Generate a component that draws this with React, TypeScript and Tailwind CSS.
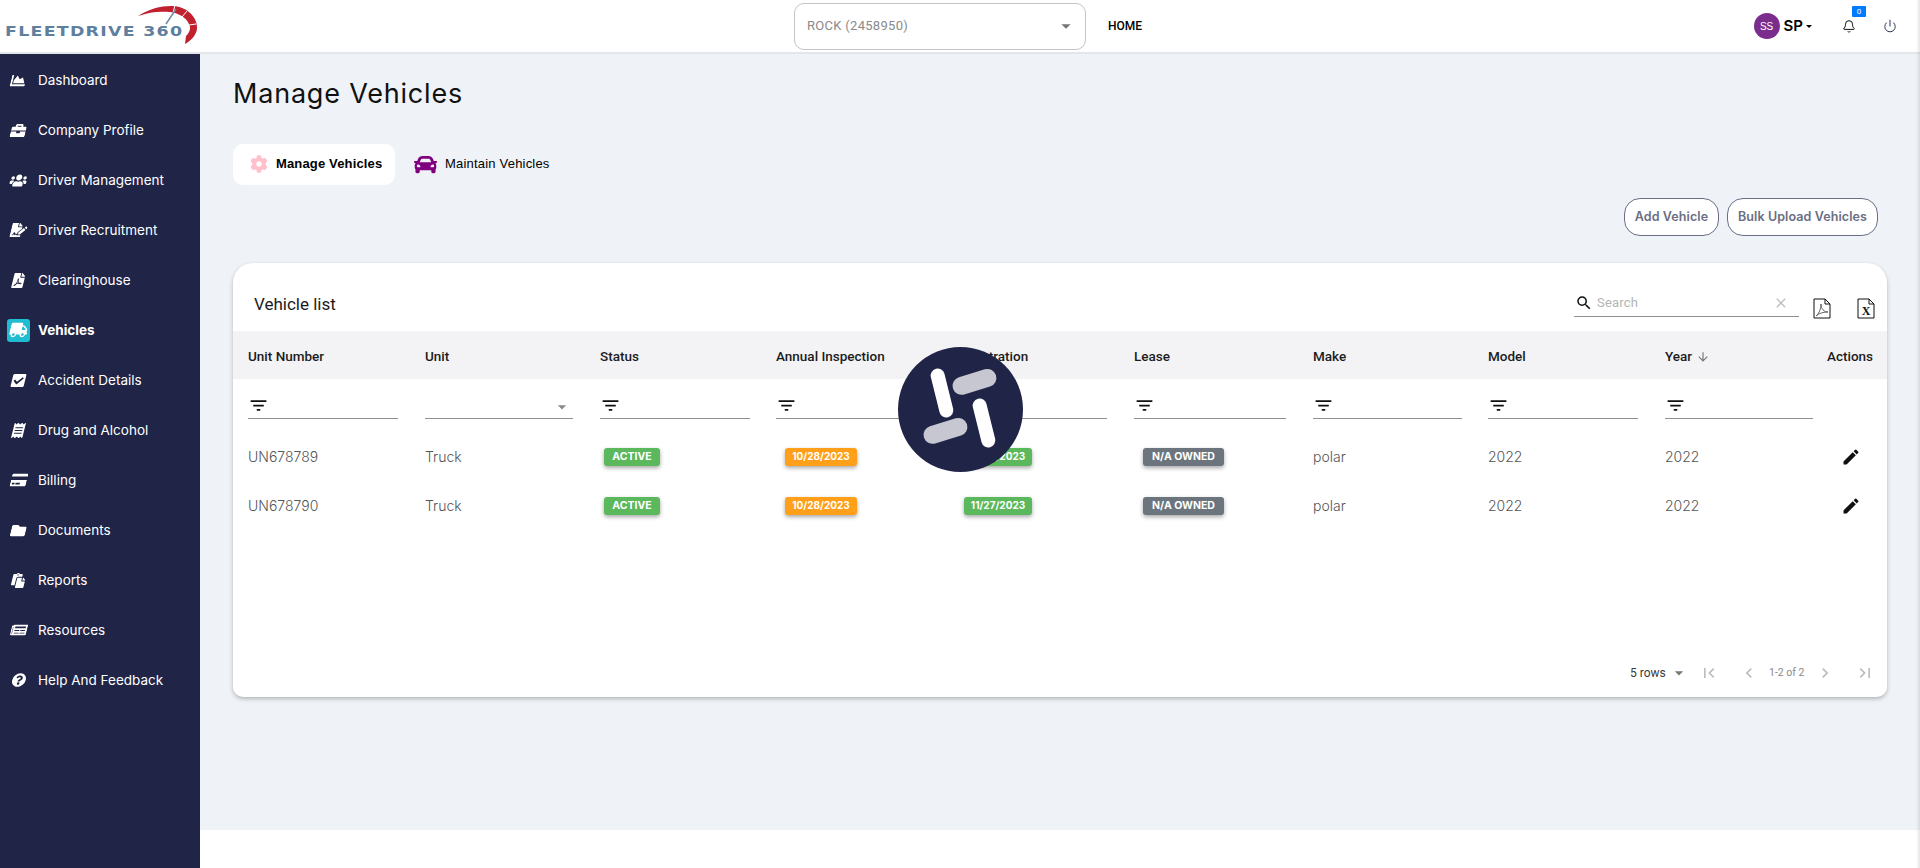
import {
  FaBriefcase,
  FaCar,
  FaChartArea,
  FaCheckSquare,
  FaCog,
  FaCreditCard,
  FaFilePdf,
  FaFileSignature,
  FaFolder,
  FaNewspaper,
  FaPaste,
  FaQuestionCircle,
  FaReceipt,
  FaTruck,
  FaUsers,
} from "react-icons/fa";
import {
  MdArrowDownward,
  MdArrowDropDown,
  MdChevronLeft,
  MdChevronRight,
  MdClear,
  MdEdit,
  MdFilterList,
  MdFirstPage,
  MdLastPage,
  MdSearch,
} from "react-icons/md";
import { Bell, Power } from "lucide-react";

const navItems = [
  { label: "Dashboard", icon: FaChartArea, size: 15 },
  { label: "Company Profile", icon: FaBriefcase, size: 15 },
  { label: "Driver Management", icon: FaUsers, size: 17 },
  { label: "Driver Recruitment", icon: FaFileSignature, size: 16 },
  { label: "Clearinghouse", icon: FaFilePdf, size: 15 },
  { label: "Vehicles", icon: FaTruck, size: 18, active: true },
  { label: "Accident Details", icon: FaCheckSquare, size: 15 },
  { label: "Drug and Alcohol", icon: FaReceipt, size: 15 },
  { label: "Billing", icon: FaCreditCard, size: 16 },
  { label: "Documents", icon: FaFolder, size: 15 },
  { label: "Reports", icon: FaPaste, size: 15 },
  { label: "Resources", icon: FaNewspaper, size: 16 },
  { label: "Help And Feedback", icon: FaQuestionCircle, size: 14 },
];

const columns = ["Unit Number", "Unit", "Status", "Annual Inspection", "Registration", "Lease", "Make", "Model"];

const rows = [
  { unit: "UN678789" },
  { unit: "UN678790" },
];

const gridCols = "grid grid-cols-[177px_175px_176px_179px_179px_179px_175px_177px_162px_1fr] pl-[15px]";

function Logo() {
  return (
    <div className="relative h-[52px] w-[200px] shrink-0">
      <span className="absolute left-[5px] top-[19px] origin-left scale-x-[1.2] font-['DejaVu_Sans'] text-[14.500px] font-bold leading-[24px] tracking-[1.05px] text-[#5f7f9f] whitespace-nowrap">
        FLEETDRIVE 360
      </span>
      <svg className="absolute left-0 top-0" width="200" height="52" viewBox="0 0 200 52">
        <path
          d="M138 16C150 8 163 5.500 173 6C188 7 198 18 197 29C196 35 192 40 185 44L186 36C190 32 191 28 189 24C186 17 178 13 170 12C159 11 149 12 138 16Z"
          fill="#c1202f"
        />
        <path d="M175 5L173 13M187 11L182 17M196 24L189 25" stroke="#fff" strokeWidth="1" />
        <path d="M166 24L176 9" stroke="#6d8aa6" strokeWidth="1.500" />
      </svg>
    </div>
  );
}

function Header() {
  return (
    <header className="flex h-[54px] shrink-0 items-center border-b-2 border-[#e2e6ea] bg-white">
      <Logo />
      <div className="ml-[594px] flex h-[47px] w-[292px] items-center justify-between rounded-[10px] border border-[#c4c4c4] pl-[12px] pr-[8px] font-['Roboto'] text-[13px] tracking-[0.3px] text-[#8a8a8a]">
        <span>ROCK (2458950)</span>
        <MdArrowDropDown size={22} className="text-[#757575]" />
      </div>
      <span className="ml-[22px] font-['Roboto'] text-[12px] font-medium text-black">HOME</span>
      <div className="ml-auto flex items-center pr-[23px]">
        <div className="flex h-[26px] w-[26px] items-center justify-center rounded-full bg-[#7b2d8e] font-['Liberation_Sans'] text-[10px] text-white">
          SS
        </div>
        <span className="ml-[4px] font-['Inter'] text-[15px] font-semibold text-black">SP</span>
        <span className="ml-[3px] h-0 w-0 border-x-[3px] border-t-[3px] border-x-transparent border-t-black" />
        <div className="relative ml-[30px] flex h-[26px] w-[14px] items-center justify-center pt-[1px]">
          <Bell size={15} strokeWidth={1.600} className="text-black" />
          <span className="absolute left-[10px] top-[-7px] flex h-[11px] w-[14px] items-center justify-center rounded-[1px] bg-[#007bff] font-['Roboto'] text-[8px] text-white">
            0
          </span>
        </div>
        <Power size={14} strokeWidth={1.600} className="ml-[27px] text-[#1f2a4d]" />
      </div>
    </header>
  );
}

function Sidebar() {
  return (
    <aside className="w-[200px] shrink-0 bg-[#202447] pt-[1px]">
      {navItems.map((item) => {
        const Icon = item.icon;
        return (
          <div key={item.label} className="flex h-[50px] items-center text-white">
            <div
              className={`ml-[7px] flex h-[23px] w-[23px] items-center justify-center rounded-[3px] ${
                item.active ? "bg-[#1fbcd2]" : ""
              }`}
            >
              <Icon size={item.size} className="-skew-x-[14deg]" />
            </div>
            <span
              className={`ml-[8px] font-['Inter'] text-[13.500px] ${item.active ? "font-bold" : "font-normal"}`}
            >
              {item.label}
            </span>
          </div>
        );
      })}
    </aside>
  );
}

function FilterCell({ w = "w-[150px]" }: { w?: string }) {
  return (
    <div className={`flex h-[24px] items-center border-b border-[#8f8f8f] pb-[2px] ${w}`}>
      <MdFilterList size={21} className="text-[#111]" />
    </div>
  );
}

function DocIcon({ kind }: { kind: "pdf" | "xls" }) {
  return (
    <svg width="18" height="21" viewBox="0 0 18 21" fill="none">
      <path d="M1 1H12L17 6V20H1Z M12 1V6H17" stroke="#111" strokeWidth="1" fill="#fff" />
      {kind === "pdf" ? (
        <path d="M3 18C6 16 8 11 8 6C8 11 11 14 15 14C11 14 6 15 3 18Z" stroke="#555" strokeWidth="0.900" />
      ) : (
        <text x="9" y="17" textAnchor="middle" fontFamily="Liberation Serif" fontWeight="700" fontSize="12" fill="#111">
          X
        </text>
      )}
    </svg>
  );
}

function Badge({ text, color, className }: { text: string; color: string; className: string }) {
  return (
    <span
      className={`flex h-[18px] items-center justify-center rounded-[3px] font-['Inter'] font-bold text-white shadow-[0_2px_4px_rgba(0,0,0,0.35)] ${color} ${className}`}
    >
      {text}
    </span>
  );
}

function VehicleTable() {
  return (
    <div className="flex h-[434px] flex-col rounded-t-[20px] rounded-b-[10px] bg-white shadow-[0_2px_4px_rgba(0,0,0,0.25)]">
      <div className="flex h-[68px] shrink-0 items-end pb-[12px] pl-[21px] pr-[12px]">
        <span className="mb-[3px] font-['Roboto'] text-[17px] leading-[24px] text-[#1b1b1b]">Vehicle list</span>
        <div className="mb-[2px] ml-auto flex h-[30px] w-[225px] items-center border-b border-[#8f8f8f] pl-[1px] pr-[10px] pt-[3px]">
          <MdSearch size={18} className="text-[#111]" />
          <span className="ml-[4px] font-['Roboto'] text-[13px] tracking-[0.2px] text-[#b5b5b5]">Search</span>
          <MdClear size={16} className="ml-auto text-[#bdbdbd]" />
        </div>
        <div className="ml-[14px] flex">
          <DocIcon kind="pdf" />
        </div>
        <div className="ml-[26px] flex">
          <DocIcon kind="xls" />
        </div>
      </div>

      <div className={`${gridCols} h-[48px] shrink-0 items-center bg-[#f3f3f6] pt-[3px] font-['Roboto'] text-[13.500px] font-medium text-[#1c1c1c]`}>
        {columns.map((col) => (
          <span key={col}>{col}</span>
        ))}
        <span className="flex items-center">
          Year
          <MdArrowDownward size={14} className="ml-[4px] text-[#777]" />
        </span>
        <span>Actions</span>
      </div>

      <div className={`${gridCols} h-[53px] shrink-0 items-end pb-[13px]`}>
        <FilterCell />
        <div className="flex h-[24px] w-[148px] items-center justify-end border-b border-[#8f8f8f] pr-[1px]">
          <MdArrowDropDown size={20} className="text-[#8a8a8a]" />
        </div>
        <FilterCell />
        <FilterCell />
        <FilterCell w="w-[152px]" />
        <FilterCell w="w-[152px]" />
        <FilterCell w="w-[149px]" />
        <FilterCell />
        <FilterCell w="w-[148px]" />
      </div>

      {rows.map((row) => (
        <div
          key={row.unit}
          className={`${gridCols} h-[49px] shrink-0 items-center font-['Inter'] text-[14px] font-light text-[#555]`}
        >
          <span>{row.unit}</span>
          <span>Truck</span>
          <span>
            <Badge text="ACTIVE" color="bg-[#5cb85c]" className="ml-[4px] w-[56px] text-[10.500px]" />
          </span>
          <span>
            <Badge text="10/28/2023" color="bg-[#ff9f1a]" className="ml-[9px] w-[72px] text-[10px]" />
          </span>
          <span>
            <Badge text="11/27/2023" color="bg-[#5cb85c]" className="ml-[9px] w-[68px] text-[10px]" />
          </span>
          <span>
            <Badge text="N/A OWNED" color="bg-[#6c757d]" className="ml-[9px] w-[81px] text-[10.500px]" />
          </span>
          <span>polar</span>
          <span>2022</span>
          <span>2022</span>
          <span className="pl-[14px]">
            <MdEdit size={20} className="text-[#111]" />
          </span>
        </div>
      ))}

      <div className="mt-auto flex h-[48px] items-center pl-[1397px] font-['Roboto'] text-[#3a3a3a]">
        <span className="w-[35px] whitespace-nowrap text-[12px]">5 rows</span>
        <MdArrowDropDown size={20} className="ml-[4px] text-[#777]" />
        <MdFirstPage size={20} className="ml-[10px] text-[#bdbdbd]" />
        <MdChevronLeft size={20} className="ml-[20px] text-[#bdbdbd]" />
        <span className="ml-[10px] whitespace-nowrap text-[10.500px] text-[#8a8a8a]">1-2 of 2</span>
        <MdChevronRight size={20} className="ml-[11px] text-[#bdbdbd]" />
        <MdLastPage size={20} className="ml-[20px] text-[#bdbdbd]" />
      </div>
    </div>
  );
}

function Loader() {
  return (
    <svg className="absolute left-[898px] top-[347px]" width="125" height="125" viewBox="0 0 125 125">
      <circle cx="62.500" cy="62.500" r="62.500" fill="#202447" />
      <rect x="37" y="21" width="14" height="50" rx="7" fill="#fff" transform="rotate(-14 44 46)" />
      <rect x="54" y="26" width="45" height="18" rx="9" fill="#c6c7d0" transform="rotate(-17 76 35)" />
      <rect x="79" y="51" width="14" height="50" rx="7" fill="#fff" transform="rotate(-14 86 76)" />
      <rect x="25" y="75" width="45" height="18" rx="9" fill="#c6c7d0" transform="rotate(-17 47 84)" />
    </svg>
  );
}

export default function App() {
  return (
    <div className="relative flex h-[868px] w-full flex-col overflow-hidden bg-white">
      <Header />
      <div className="flex min-h-0 flex-1">
        <Sidebar />
        <div className="flex min-w-0 flex-1 flex-col">
          <main className="h-[776px] shrink-0 bg-[#eff3f7] px-[33px] pt-[24px]">
            <h1 className="font-['Inter'] text-[27px] font-normal leading-[32px] tracking-[0.8px] text-[#111]">Manage Vehicles</h1>
            <div className="mt-[34px] flex items-center">
              <div className="flex h-[41px] w-[162px] items-center rounded-[10px] bg-white pb-[1px] pl-[17px]">
                <FaCog size={18} className="text-[#ffc0cb]" />
                <span className="ml-[8px] font-['Liberation_Sans'] text-[13px] font-bold tracking-[0.15px] text-black">Manage Vehicles</span>
              </div>
              <div className="ml-[19px] flex items-center pb-[1px]">
                <FaCar size={23} className="text-[#800080]" />
                <span className="ml-[8px] font-['Liberation_Sans'] text-[13px] tracking-[0.2px] text-black">Maintain Vehicles</span>
              </div>
            </div>
            <div className="mt-[13px] flex justify-end gap-[8px] pr-[9px]">
              <button className="h-[38px] w-[95px] rounded-[16px] border border-[#6a6e88] bg-white font-['Inter'] text-[12.500px] font-semibold tracking-[0.1px] text-[#6a6e82]">
                Add Vehicle
              </button>
              <button className="h-[38px] w-[151px] rounded-[16px] border border-[#6a6e88] bg-white font-['Inter'] text-[12.500px] font-semibold tracking-[0.1px] text-[#6a6e82]">
                Bulk Upload Vehicles
              </button>
            </div>
            <div className="mt-[27px]">
              <VehicleTable />
            </div>
          </main>
        </div>
      </div>
      <Loader />
      <div className="pointer-events-none absolute inset-y-0 right-0 w-[4px] bg-gradient-to-r from-transparent to-black/10" />
    </div>
  );
}
